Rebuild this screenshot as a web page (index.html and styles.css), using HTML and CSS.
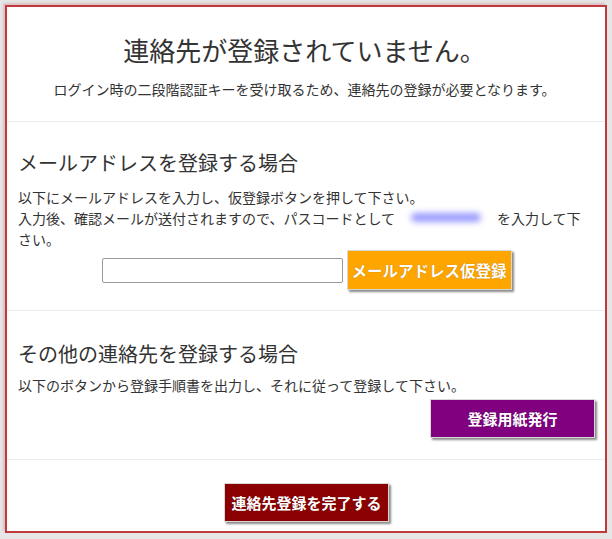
FILE: index.html
```html
<!DOCTYPE html>
<html lang="ja">
<head>
<meta charset="utf-8">
<title>連絡先登録</title>
<link rel="stylesheet" href="styles.css">
</head>
<body>
<div class="frame">
  <section class="sec sec-top">
    <h1 class="title">連絡先が登録されていません。</h1>
    <p class="lead">ログイン時の二段階認証キーを受け取るため、連絡先の登録が必要となります。</p>
  </section>
  <div class="rule"></div>
  <section class="sec sec-mail">
    <h2 class="heading">メールアドレスを登録する場合</h2>
    <p class="text">以下にメールアドレスを入力し、仮登録ボタンを押して下さい。<br>入力後、確認メールが送付されますので、パスコードとして<span class="secret" aria-hidden="true"></span>を入力して下さい。</p>
    <div class="mail-row">
      <input class="mail-input" type="text">
      <button class="btn btn-orange">メールアドレス仮登録</button>
    </div>
  </section>
  <div class="rule"></div>
  <section class="sec sec-other">
    <h2 class="heading">その他の連絡先を登録する場合</h2>
    <p class="text">以下のボタンから登録手順書を出力し、それに従って登録して下さい。</p>
    <div class="right-row">
      <button class="btn btn-purple">登録用紙発行</button>
    </div>
  </section>
  <div class="rule"></div>
  <section class="sec sec-done">
    <button class="btn btn-red">連絡先登録を完了する</button>
  </section>
</div>
</body>
</html>
```

FILE: styles.css
```css
* { box-sizing: border-box; }
html, body { margin: 0; padding: 0; }
body {
  background: #e6e6e6;
  font-family: "Noto Sans CJK JP", "Noto Sans", sans-serif;
  color: #333;
  padding: 5px 5px 6px 5px;
}
.frame {
  background: #fff;
  border: 2px solid #c03a3c;
  box-shadow: -2px -2px 2px rgba(200, 120, 130, 0.35);
  height: 528px;
}
.rule {
  height: 1px;
  background: #ececec;
}
.sec { padding: 0 14px 0 11px; }
.sec-top {
  padding-top: 26px;
  padding-bottom: 22px;
  text-align: center;
}
.title {
  margin: 0;
  font-size: 26px;
  line-height: 34px;
  font-weight: 400;
  color: #333;
}
.lead {
  margin: 12px 0 0;
  font-size: 14px;
  line-height: 20px;
  color: #333;
}
.heading {
  margin: 0;
  font-size: 20px;
  line-height: 28px;
  font-weight: 400;
  color: #333;
}
.text {
  margin: 0;
  font-size: 14px;
  line-height: 21px;
  color: #333;
}
.sec-mail { padding-top: 27px; padding-bottom: 20px; }
.sec-mail .text { margin-top: 10px; }
.secret {
  display: inline-block;
  width: 70px;
  margin: 0 16px;
  background: #9a9aff;
  border-radius: 6px;
  height: 9px;
  vertical-align: 2px;
  filter: blur(3px);
}
.mail-row {
  display: flex;
  justify-content: center;
  align-items: center;
  gap: 4px;
  padding-left: 4px;
}
.mail-input {
  width: 241px;
  height: 25px;
  border: 1px solid #999;
  border-radius: 2px;
  margin: 0;
  padding: 2px 4px;
  font-size: 14px;
  background: #fff;
}
.btn {
  width: 165px;
  height: 39px;
  margin: 0;
  padding: 0;
  border: 1px solid #d8d8d8;
  box-shadow: 2px 2px 2px #8a8a8a;
  color: #fff;
  font-family: "Noto Sans CJK JP", "Noto Sans", sans-serif;
  font-weight: 700;
  font-size: 15px;
  line-height: 37px;
  text-shadow: 0 0 1px rgba(0, 0, 0, 0.35);
  cursor: pointer;
}
.btn-orange { background: #ffa500; height: 40px; font-size: 15.5px; }
.btn-purple { background: #800080; }
.btn-red { background: #8b0000; }
.sec-other { padding-top: 29px; padding-bottom: 21px; }
.sec-other .text { margin-top: 7px; }
.right-row {
  display: flex;
  justify-content: flex-end;
  margin-top: 3px;
  margin-right: -4px;
}
.sec-done {
  padding-top: 23px;
  padding-bottom: 10px;
  display: flex;
  justify-content: center;
  padding-left: 13px;
  padding-right: 12px;
}
```
